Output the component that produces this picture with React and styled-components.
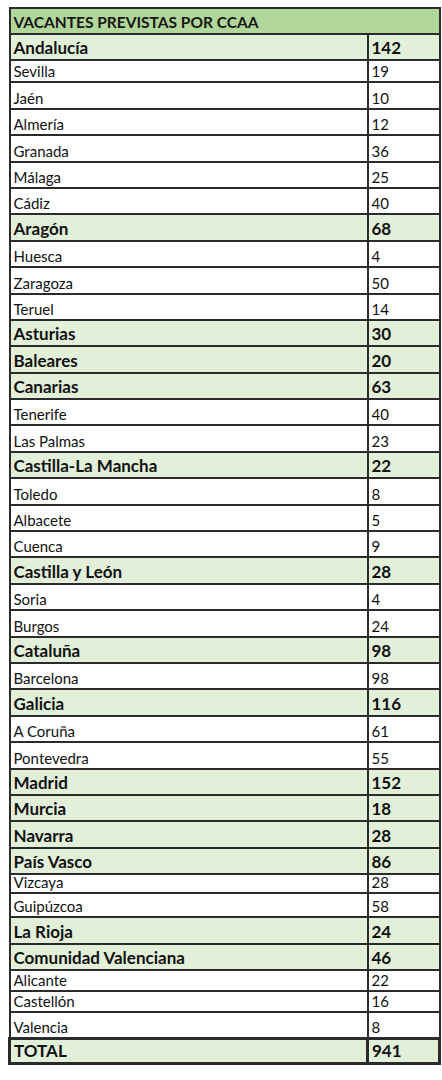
import React from "react";
import styled, { createGlobalStyle } from "styled-components";

const Global = createGlobalStyle`
  html, body { margin: 0; padding: 0; background: #ffffff; }
  body { padding: 7px 0 0 8px; font-family: Lato, "Open Sans", sans-serif; color: #111; }
`;

const Table = styled.table`
  border-collapse: collapse;
  width: 430px;
  table-layout: fixed;
  font-family: Lato, "Open Sans", sans-serif;
`;

const Title = styled.th`
  height: 26px;
  background: #b1d69b;
  border: 2px solid #2b2b2b;
  text-align: left;
  vertical-align: bottom;
  padding: 0 3px 3px 3px;
  font-size: 15.5px;
  font-weight: 700;
  line-height: 1;
  color: #161616;
  box-sizing: border-box;
`;

const Row = styled.tr`
  height: ${(p) => p.$h}px;
  background: ${(p) => (p.$group ? "#e2efd9" : "#ffffff")};
`;

const Cell = styled.td`
  border: ${(p) => (p.$total ? "3px" : "2px")} solid #2b2b2b;
  vertical-align: bottom;
  padding: 0 3px ${(p) => (p.$bold ? 3 : 2)}px 3px;
  font-size: ${(p) => (p.$bold ? 17 : 15)}px;
  font-weight: ${(p) => (p.$bold ? 700 : 400)};
  line-height: 1;
  white-space: nowrap;
  color: #111;
  box-sizing: border-box;
`;

const NameCol = styled.col`
  width: 358px;
`;
const ValCol = styled.col`
  width: 72px;
`;

const H = 26.4;

const rows = [
  ["Andalucía", 142, "g"],
  ["Sevilla", 19, "", 22],
  ["Jaén", 10, "", 26.4],
  ["Almería", 12],
  ["Granada", 36],
  ["Málaga", 25],
  ["Cádiz", 40],
  ["Aragón", 68, "g"],
  ["Huesca", 4],
  ["Zaragoza", 50],
  ["Teruel", 14],
  ["Asturias", 30, "g"],
  ["Baleares", 20, "g"],
  ["Canarias", 63, "g"],
  ["Tenerife", 40],
  ["Las Palmas", 23],
  ["Castilla-La Mancha", 22, "g"],
  ["Toledo", 8],
  ["Albacete", 5],
  ["Cuenca", 9],
  ["Castilla y León", 28, "g"],
  ["Soria", 4],
  ["Burgos", 24],
  ["Cataluña", 98, "g"],
  ["Barcelona", 98],
  ["Galicia", 116, "g"],
  ["A Coruña", 61],
  ["Pontevedra", 55],
  ["Madrid", 152, "g"],
  ["Murcia", 18, "g"],
  ["Navarra", 28, "g"],
  ["País Vasco", 86, "g"],
  ["Vizcaya", 28, "", 19],
  ["Guipúzcoa", 58, "", 24],
  ["La Rioja", 24, "g"],
  ["Comunidad Valenciana", 46, "g"],
  ["Alicante", 22, "", 21],
  ["Castellón", 16, "", 21],
  ["Valencia", 8, "", 26.4],
];

export default function App() {
  return (
    <>
      <Global />
      <Table>
        <colgroup>
          <NameCol />
          <ValCol />
        </colgroup>
        <thead>
          <tr>
            <Title colSpan={2}>VACANTES PREVISTAS POR CCAA</Title>
          </tr>
        </thead>
        <tbody>
          {rows.map(([name, val, kind, h]) => {
            const g = kind === "g";
            return (
              <Row key={name} $group={g} $h={h || H}>
                <Cell $bold={g}>{name}</Cell>
                <Cell $bold={g}>{val}</Cell>
              </Row>
            );
          })}
          <Row $group $h={25}>
            <Cell $bold $total>TOTAL</Cell>
            <Cell $bold $total>941</Cell>
          </Row>
        </tbody>
      </Table>
    </>
  );
}
